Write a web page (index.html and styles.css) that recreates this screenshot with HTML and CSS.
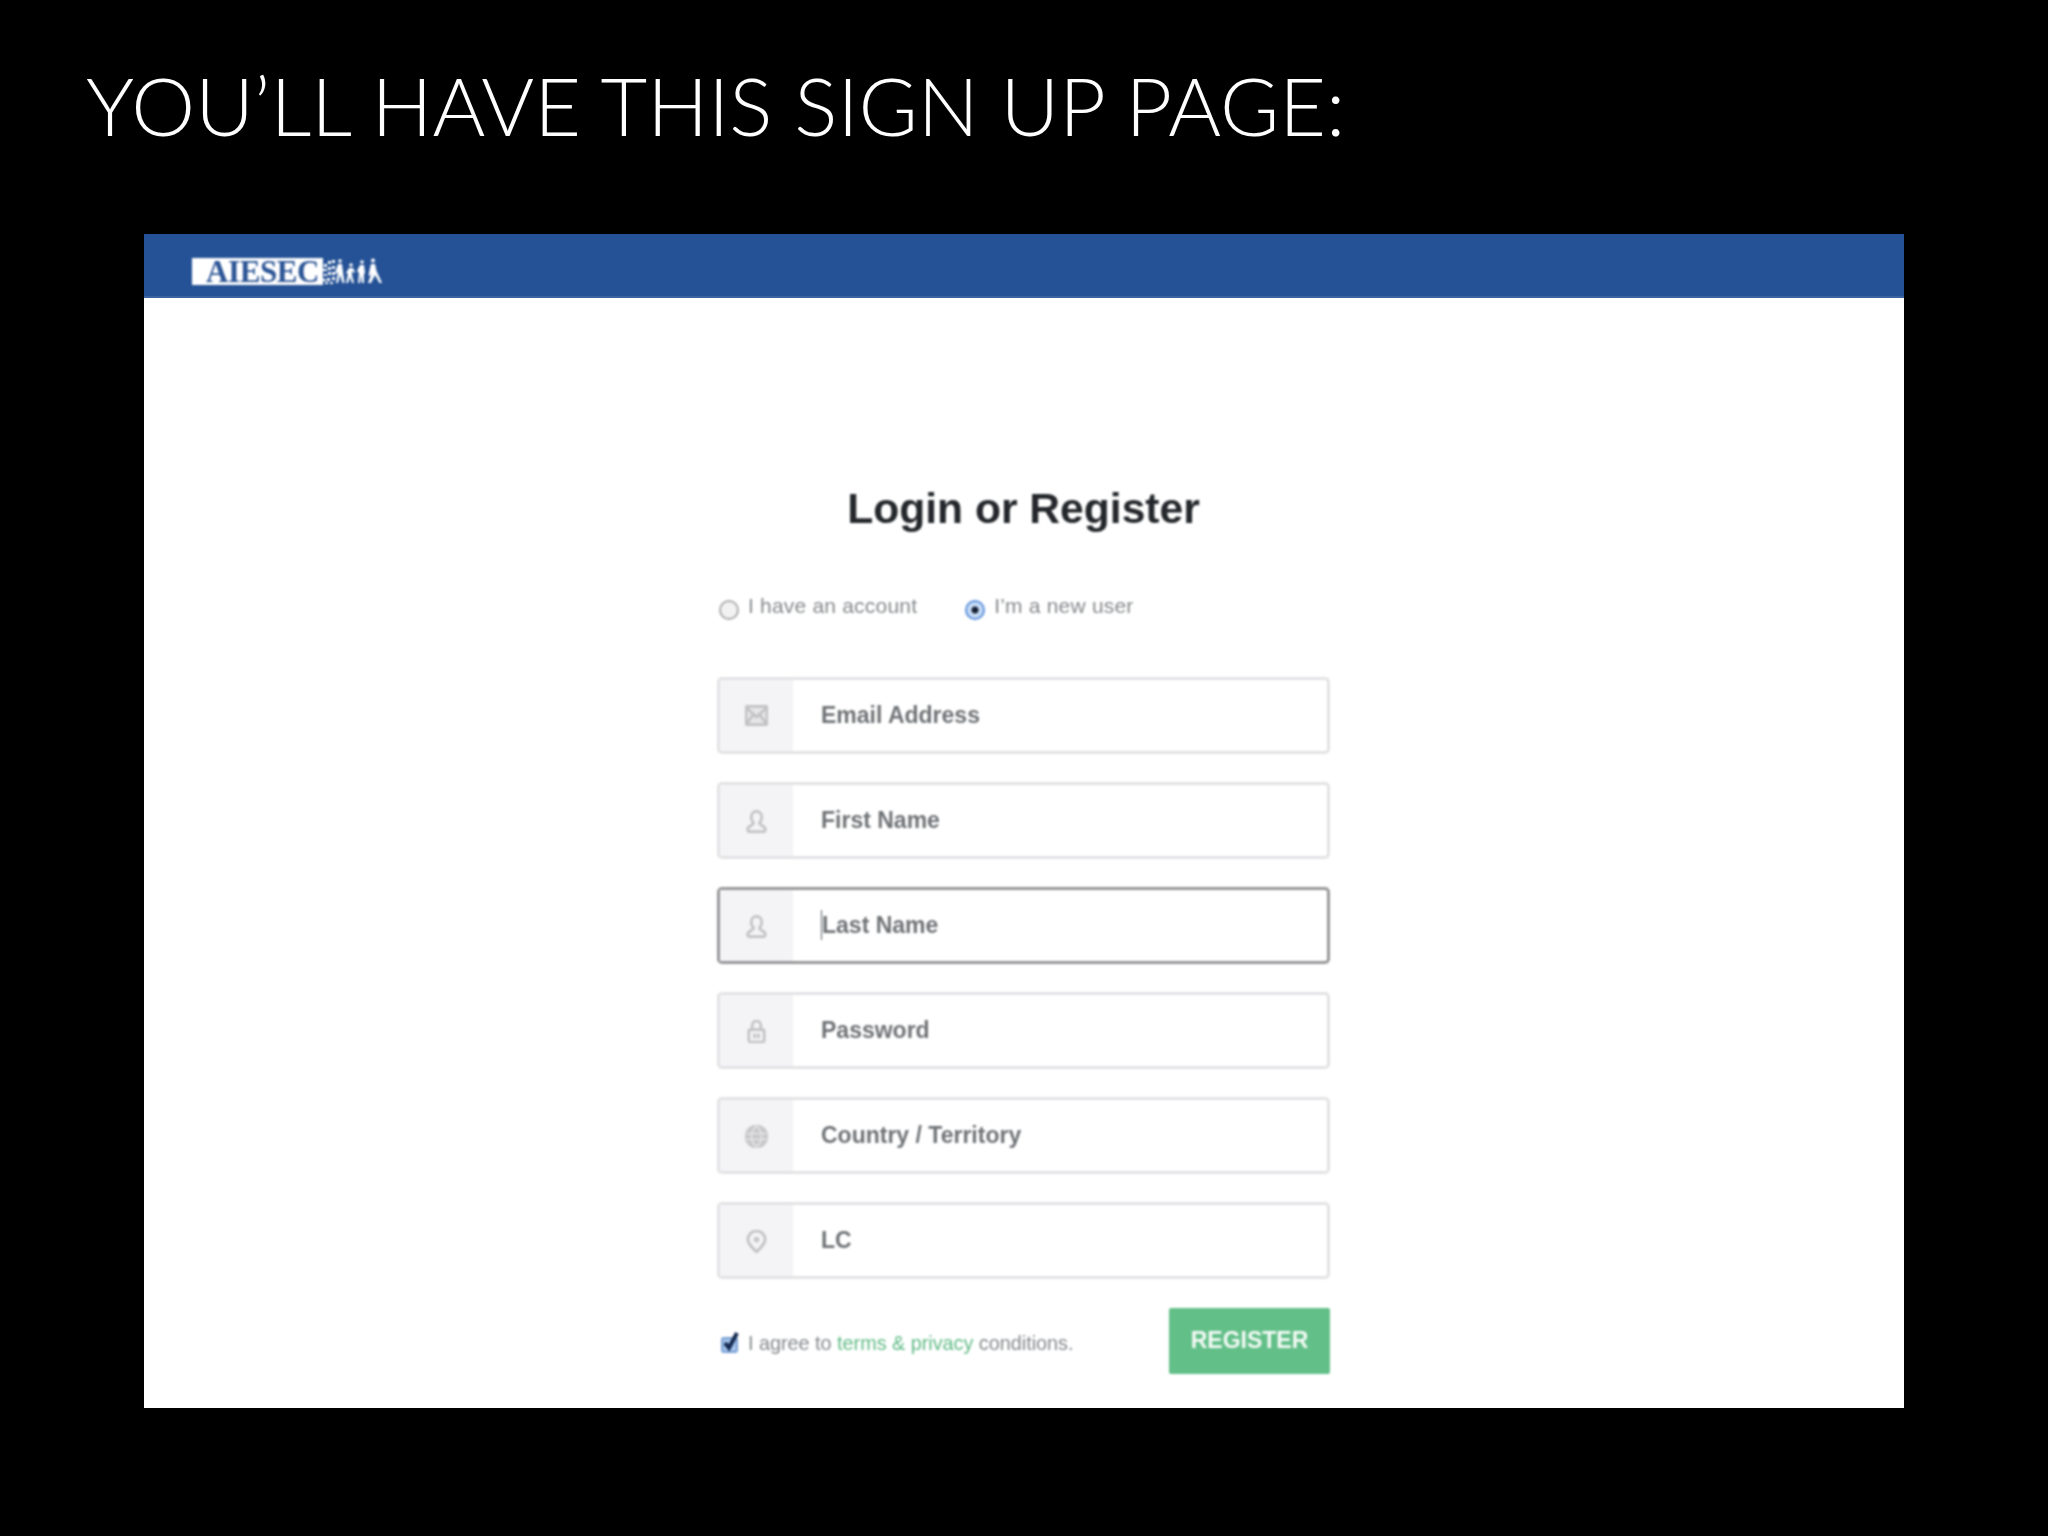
FILE: index.html
```html
<!DOCTYPE html>
<html lang="en">
<head>
<meta charset="utf-8">
<title>Sign up page</title>
<link rel="stylesheet" href="styles.css">
</head>
<body>
<h1 class="slide-title">YOU’LL HAVE THIS SIGN UP PAGE:</h1>
<section class="shot">
  <header class="topbar">
    <div class="logo">
      <span class="logo-word">AIESEC</span>
      <svg class="logo-people" viewBox="0 0 60 27" width="60" height="27" fill="#fff" aria-hidden="true">
        <path d="M1 6h3v3H1zM5 3h3v3H5zM9 2h3v3H9zM0 11h4v2H0zM5 9h3v3H5zM9 8h3v3H9zM1 16h3v2H1zM5 14h3v3H5zM9 14h3v3H9zM-1 21h4v2h-4zM4 20h3v3H4zM9 19h3v3H9zM2 24h3v2H2zM7 24h3v2H7z"/>
        <circle cx="17" cy="3" r="1.800"/><path d="M15 6h4l1 8 1.500 11h-2l-2.500-8-2 8h-2l2-11-2 2-1-1z"/>
        <circle cx="28" cy="7" r="1.800"/><path d="M26 10h4l2 4-1 1-2-2 0 4 2 8h-2l-2-6-2 6h-2l2-9-2-1z"/>
        <circle cx="39" cy="4" r="1.800"/><path d="M37 7h4l1 8-1 1 0 9h-2l-1-8-1 8h-2l1-10-2-2z"/>
        <circle cx="50" cy="2.500" r="2"/><path d="M48 6h4l1.500 7 5.500 12h-2.500l-4.500-8-4 8H45l4-11-2 4-1.500-1z"/>
      </svg>
    </div>
  </header>
  <main class="auth">
    <h2 class="auth-title">Login or Register</h2>
    <div class="choice">
      <label class="radio-row"><span class="radio"></span>I have an account</label>
      <label class="radio-row"><span class="radio radio-on"></span>I’m a new user</label>
    </div>
    <form class="fields">
      <div class="field">
        <span class="addon">
          <svg class="icon icon-mail" viewBox="0 0 24 24"><rect x="1" y="2.500" width="22" height="19" rx="1"/><path d="M2 4.500l10 9 10-9M2 20l7-9M22 20l-7-9"/></svg>
        </span>
        <span class="hint">Email Address</span>
      </div>
      <div class="field">
        <span class="addon">
          <svg class="icon" viewBox="0 0 24 24"><path d="M12 1.500c-3.500 0-5.500 2.500-5.500 6 0 2.500 1 4.500 2.500 6 .5 2-5 3-6 5.500-.5 1.500 0 3.500 1 3.500h16c1 0 1.500-2 1-3.500-1-2.500-6.500-3.500-6-5.500 1.500-1.500 2.500-3.500 2.500-6 0-3.500-2-6-5.500-6z"/></svg>
        </span>
        <span class="hint">First Name</span>
      </div>
      <div class="field field-focus">
        <span class="addon">
          <svg class="icon" viewBox="0 0 24 24"><path d="M12 1.500c-3.500 0-5.500 2.500-5.500 6 0 2.500 1 4.500 2.500 6 .5 2-5 3-6 5.500-.5 1.500 0 3.500 1 3.500h16c1 0 1.500-2 1-3.500-1-2.500-6.500-3.500-6-5.500 1.500-1.500 2.500-3.500 2.500-6 0-3.500-2-6-5.500-6z"/></svg>
        </span>
        <span class="hint hint-caret">Last Name</span>
      </div>
      <div class="field">
        <span class="addon">
          <svg class="icon" viewBox="0 0 24 24"><rect x="4" y="10" width="16" height="13" rx="2"/><path d="M7.500 10V6a4.500 5 0 0 1 9 0V10M10 14v5M14 14v5"/></svg>
        </span>
        <span class="hint">Password</span>
      </div>
      <div class="field">
        <span class="addon">
          <svg class="icon icon-globe" viewBox="0 0 24 24"><circle cx="12" cy="12" r="11"/><path class="globe-lines" d="M1 9h22M1 15h22M12 1c-7 6-7 16 0 22M12 1c7 6 7 16 0 22"/></svg>
        </span>
        <span class="hint">Country / Territory</span>
      </div>
      <div class="field">
        <span class="addon">
          <svg class="icon" viewBox="0 0 24 24"><path d="M12 23C7 18 3 14 3 10a9 9 0 0 1 18 0C21 14 17 18 12 23z"/><circle class="pin-dot" cx="12" cy="10" r="3"/></svg>
        </span>
        <span class="hint">LC</span>
      </div>
    </form>
    <div class="actions">
      <label class="agree">
        <span class="check"><svg viewBox="0 0 20 22" width="20" height="22"><path d="M4 12l4 5 8-15"/></svg></span>
        I agree to&nbsp;<a class="terms">terms &amp; privacy</a>&nbsp;conditions.
      </label>
      <button class="register" type="button">REGISTER</button>
    </div>
  </main>
</section>
</body>
</html>
```
FILE: styles.css
```css
* { box-sizing: border-box; }
html, body { margin: 0; padding: 0; }
body {
  width: 2048px;
  height: 1536px;
  background: #000;
  overflow: hidden;
  font-family: "Liberation Sans", Arial, sans-serif;
}
.slide-title {
  margin: 0;
  padding: 57px 0 0 86px;
  height: 234px;
  color: #fff;
  font-family: Lato, "Open Sans", sans-serif;
  font-weight: 300;
  font-size: 80.700px;
  line-height: 96px;
  white-space: nowrap;
}
.shot {
  margin-left: 144px;
  width: 1760px;
  height: 1174px;
  background: #fff;
  overflow: hidden;
}
.topbar {
  height: 64px;
  background: #255296;
  border-bottom: 2px solid #3a639f;
  padding: 24px 0 0 48px;
}
.logo { display: flex; align-items: stretch; height: 27px; filter: blur(0.8px); }
.logo-word {
  width: 131px;
  flex: none;
  background: #fff;
  color: #2c5596;
  font-family: "Liberation Serif", serif;
  font-weight: 700;
  font-size: 31px;
  line-height: 27px;
  letter-spacing: -0.400px;
  padding-left: 14px;
  white-space: nowrap;
}
.logo-people { display: block; flex: none; }
.auth {
  width: 613px;
  margin-left: 573px;
  padding-top: 185px;
  filter: blur(0.8px);
}
.auth-title {
  margin: 0;
  text-align: center;
  color: #24272b;
  font-size: 42.600px;
  line-height: 50px;
  font-weight: 700;
}
.choice {
  display: flex;
  gap: 48px;
  margin: 61px 0 0;
  padding-left: 2px;
  height: 83px;
  color: #85888b;
  font-size: 21px;
}
.radio-row { display: flex; align-items: flex-start; line-height: 24px; gap: 9px; letter-spacing: .2px; }
.radio {
  width: 20px;
  height: 20px;
  margin-top: 6px;
  border-radius: 50%;
  border: 2px solid #aeaeae;
  background: #f2f2f2;
}
.radio-on {
  border-color: #5f93dc;
  background: radial-gradient(circle, #152033 0 3px, #c6dbf6 4px);
}
.fields { display: flex; flex-direction: column; gap: 28px; }
.field {
  display: flex;
  align-items: center;
  height: 77px;
  border: 3px solid #e3e3e5;
  border-radius: 5px;
  background: #fff;
}
.field-focus { border-color: #98989a; }
.addon {
  width: 73px;
  align-self: stretch;
  flex: none;
  display: flex;
  align-items: center;
  justify-content: center;
  background: #f4f4f6;
}
.icon {
  width: 23px;
  height: 23px;
  margin-top: 2px;
  fill: none;
  stroke: #c2c2c4;
  stroke-width: 2.800;
}
.icon-mail { margin-top: 0; fill: #e6e6e8; }
.icon-globe { fill: #c8c8ca; stroke: #c8c8ca; }
.globe-lines { stroke: #e8e8ea; stroke-width: 1.500; fill: none; }
.pin-dot { fill: #c8c8ca; stroke: none; }
.hint {
  margin: 0 0 2px 28px;
  color: #6f7275;
  font-weight: 700;
  font-size: 23px;
  line-height: 30px;
}
.hint-caret { border-left: 1px solid #5a6066; }
.actions {
  display: flex;
  align-items: center;
  justify-content: space-between;
  margin-top: 29px;
  height: 66px;
}
.agree {
  display: flex;
  align-items: center;
  padding-left: 4px;
  padding-top: 4px;
  color: #85888b;
  font-size: 19.800px;
}
.check {
  width: 17px;
  height: 16px;
  margin: 3px 10px 0 0;
  border: 2px solid #7a9fd4;
  border-radius: 3px;
  background: #a5c5ec;
  position: relative;
}
.check svg {
  position: absolute;
  left: -2px;
  top: -8px;
  fill: none;
  stroke: #14294f;
  stroke-width: 4;
}
.terms { color: #62bb87; }
.register {
  width: 161px;
  height: 66px;
  border: 0;
  border-radius: 2px;
  background: #63bf88;
  color: #f4fbf6;
  font-family: inherit;
  font-weight: 700;
  font-size: 23px;
  padding: 0 0 1px;
}
```
